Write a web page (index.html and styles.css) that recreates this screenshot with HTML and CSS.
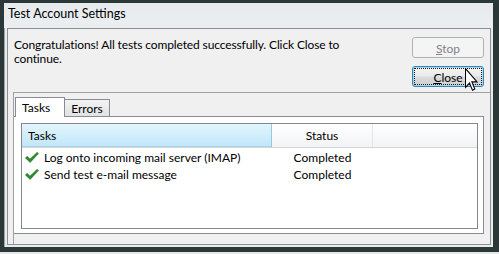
FILE: index.html
```html
<!DOCTYPE html>
<html>
<head>
<meta charset="utf-8">
<link rel="stylesheet" href="styles.css">
</head>
<body>
<div class="window">
  <div class="titlebar">Test Account Settings</div>
  <div class="client">
    <div class="top">
      <p class="msg">Congratulations! All tests completed successfully. Click Close to<br>continue.</p>
      <div class="buttons">
        <button class="btn btn-disabled"><u>S</u>top</button>
        <button class="btn btn-default"><span class="focus"><u>C</u>lose</span></button>
      </div>
    </div>
    <div class="panel">
      <div class="tabs">
        <div class="tab tab-active">Tasks</div>
        <div class="tab tab-inactive">Errors</div>
      </div>
      <div class="pane">
        <div class="list">
          <div class="header">
            <div class="hcell col-task hot">Tasks</div>
            <div class="hcell col-status">Status</div>
            <div class="hcell col-rest"></div>
          </div>
          <div class="row">
            <div class="cell col-task">
              <svg class="check" viewBox="0 0 14 11" width="14" height="11"><path d="M0.3,6 L2.2,4.2 L5,7 L12.2,0.2 L13.6,1.5 L5.2,10.6 Z" fill="#2b8a2b" stroke="#1d6a1d" stroke-width="0.4"/></svg>
              <span>Log onto incoming mail server (IMAP)</span>
            </div>
            <div class="cell col-status">Completed</div>
          </div>
          <div class="row">
            <div class="cell col-task">
              <svg class="check" viewBox="0 0 14 11" width="14" height="11"><path d="M0.3,6 L2.2,4.2 L5,7 L12.2,0.2 L13.6,1.5 L5.2,10.6 Z" fill="#2b8a2b" stroke="#1d6a1d" stroke-width="0.4"/></svg>
              <span>Send test e-mail message</span>
            </div>
            <div class="cell col-status">Completed</div>
          </div>
        </div>
      </div>
    </div>
  </div>
</div>
<svg class="cursor" viewBox="0 0 12.5 19.5" width="13" height="23" preserveAspectRatio="none"><path d="M0.5,0.5 L0.5,16.5 L4.3,12.8 L7.2,18.8 L9.4,17.8 L6.6,11.8 L11.5,11.8 Z" fill="#ffffff" stroke="#000000" stroke-width="1" stroke-linejoin="miter"/></svg>
</body>
</html>
```
FILE: styles.css
```css
* { box-sizing: border-box; }
html, body { margin: 0; padding: 0; }
body {
  position: relative;
  width: 499px;
  height: 254px;
  background: #e4e7e7;
  font-family: Lato, "Open Sans", sans-serif;
  font-size: 12px;
  color: #000;
  overflow: hidden;
}
.window {
  width: 499px;
  height: 252px;
  border-style: solid;
  border-color: #2c3838;
  border-width: 3px 6px 5px 4px;
  background: #e9ecee;
  box-shadow: inset 1px 0 0 #9ca4a6;
  display: flex;
  flex-direction: column;
}
.titlebar {
  height: 25px;
  flex: none;
  line-height: 21px;
  padding: 0 0 4px 4px;
  font-size: 12.5px;
  color: #000;
  background: linear-gradient(#e7eaec, #eceff1);
}
.client {
  flex: 1;
  margin: 0 2px 2px 3px;
  border: 1px solid #8e8f8f;
  background: #f0f0f0;
  display: flex;
  flex-direction: column;
}
.top {
  height: 63px;
  flex: none;
  padding: 8px 6px 0 6px;
  display: flex;
  justify-content: space-between;
}
.msg {
  margin: 1px 0 0 0;
  line-height: 14px;
  letter-spacing: -0.12px;
}
.buttons {
  display: flex;
  flex-direction: column;
  gap: 8px;
}
.btn {
  width: 72px;
  height: 21px;
  border-radius: 3px;
  font-family: inherit;
  font-size: 12px;
  padding: 0;
  margin: 0;
  line-height: 19px;
  text-align: center;
}
.btn-disabled {
  border: 1px solid #adb2b5;
  background: #f4f4f4;
  color: #838383;
  padding-top: 1px;
}
.btn-default {
  border: 1px solid #3c7fb1;
  box-shadow: inset 0 0 0 1px #9fdcf5;
  background: linear-gradient(#f3f3f3 0%, #ebebeb 48%, #dcdcdc 52%, #cfcfcf 100%);
  color: #000;
  padding: 1px;
}
.focus {
  display: block;
  height: 17px;
  line-height: 16px;
  padding-top: 1px;
  border: 1px dotted #1a1a1a;
}
.panel {
  flex: 1;
  margin-left: 5px;
  border-top: 1px solid #a0a0a0;
  border-left: 1px solid #a0a0a0;
  display: flex;
  flex-direction: column;
}
.tabs {
  height: 23px;
  flex: none;
  padding: 4px 0 0 1px;
  display: flex;
  align-items: flex-end;
}
.tab {
  border: 1px solid #898c95;
  border-bottom: none;
}
.tab-active {
  position: relative;
  z-index: 1;
  width: 50px;
  height: 20px;
  margin-bottom: -1px;
  background: #ffffff;
  padding-left: 6px;
  line-height: 19px;
}
.tab-inactive {
  width: 46px;
  height: 17px;
  margin-left: -1px;
  background: linear-gradient(#f2f2f2, #e2e2e2);
  text-align: center;
  line-height: 18px;
}
.pane {
  flex: 1;
  margin: 0 6px 10px 0;
  border: 1px solid #898c95;
  border-left: none;
  background: #ffffff;
  padding: 6px 5px 4px 7px;
  display: flex;
}
.list {
  flex: 1;
  border: 1px solid #828790;
  background: #ffffff;
}
.header {
  height: 24px;
  display: flex;
  border-bottom: 1px solid #d5d5d5;
  background: linear-gradient(#ffffff, #f2f3f5);
}
.hcell {
  line-height: 24px;
  border-right: 1px solid #e3e5e8;
}
.hot {
  background: linear-gradient(#e3f5fd, #bfe6fa);
  border-right: 1px solid #93c9e3;
  box-shadow: inset 0 -1px 0 #a5d5ec;
  padding-left: 6px;
}
.col-task { width: 250px; flex: none; }
.col-status { width: 101px; flex: none; text-align: center; }
.col-rest { flex: 1; border-right: none; }
.row {
  display: flex;
  height: 17px;
  line-height: 17px;
}
.header + .row { margin-top: 1px; }
.cell.col-task {
  display: flex;
  align-items: center;
  padding-left: 3px;
}
.check {
  flex: none;
  margin-right: 5px;
  margin-top: -1px;
}
.cursor {
  position: absolute;
  left: 465px;
  top: 68px;
}
```
